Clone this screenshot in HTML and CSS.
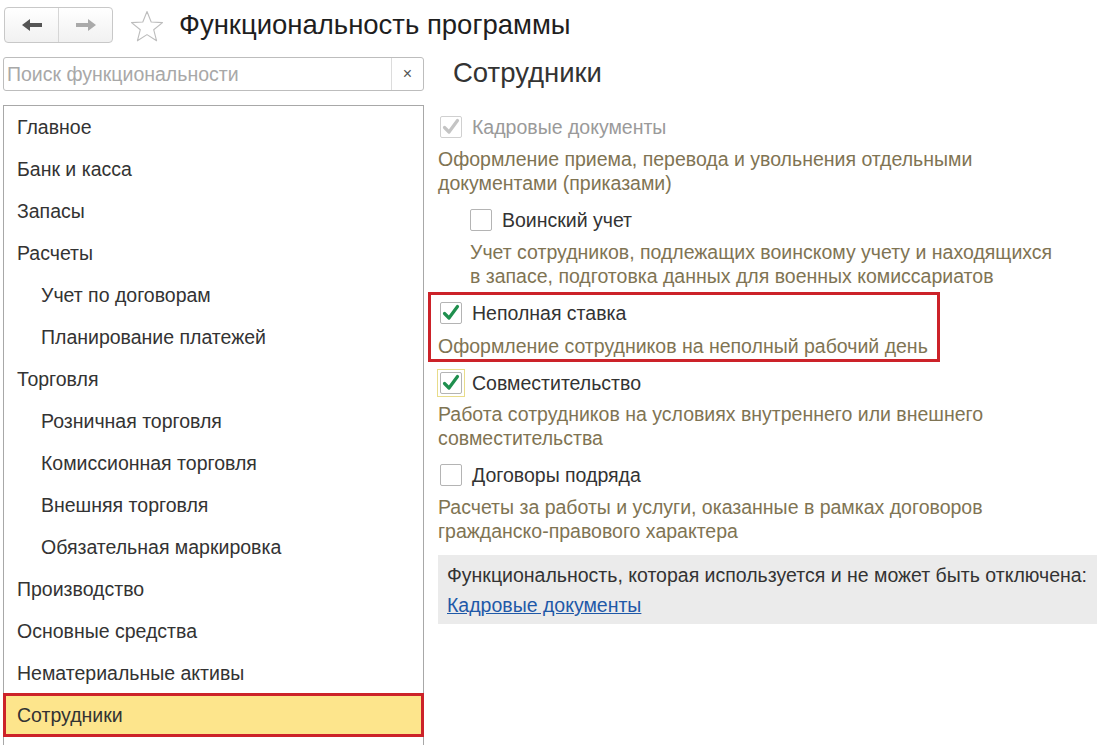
FILE: index.html
```html
<!DOCTYPE html>
<html lang="ru">
<head>
<meta charset="utf-8">
<title>Функциональность программы</title>
<link rel="stylesheet" href="styles.css">
</head>
<body>
<div class="header">
  <div class="navgroup">
    <div class="navbtn">
      <svg width="22" height="14" viewBox="0 0 22 14"><path d="M1 7 L9 1 L9 5 L21 5 L21 9 L9 9 L9 13 Z" fill="#555"/></svg>
    </div>
    <div class="navbtn">
      <svg width="22" height="14" viewBox="0 0 22 14"><path d="M21 7 L13 1 L13 5 L1 5 L1 9 L13 9 L13 13 Z" fill="#aaa"/></svg>
    </div>
  </div>
  <svg class="star" width="34" height="33" viewBox="0 0 34 33"><path d="M17 1.5 L21.2 12 L32.5 12.6 L23.7 19.7 L26.6 30.8 L17 24.6 L7.4 30.8 L10.3 19.7 L1.5 12.6 L12.8 12 Z" fill="none" stroke="#bdbdbd" stroke-width="1.1" stroke-linejoin="round"/></svg>
  <h1 class="title">Функциональность программы</h1>
</div>
<div class="main">
  <div class="leftcol">
    <div class="search">
      <span class="placeholder">Поиск функциональности</span>
      <span class="clear">×</span>
    </div>
    <ul class="sections">
      <li class="item">Главное</li>
      <li class="item">Банк и касса</li>
      <li class="item">Запасы</li>
      <li class="item">Расчеты</li>
      <li class="item sub">Учет по договорам</li>
      <li class="item sub">Планирование платежей</li>
      <li class="item">Торговля</li>
      <li class="item sub">Розничная торговля</li>
      <li class="item sub">Комиссионная торговля</li>
      <li class="item sub">Внешняя торговля</li>
      <li class="item sub">Обязательная маркировка</li>
      <li class="item">Производство</li>
      <li class="item">Основные средства</li>
      <li class="item">Нематериальные активы</li>
      <li class="item selected">Сотрудники</li>
    </ul>
  </div>
  <div class="rightcol">
    <h2 class="heading">Сотрудники</h2>
    <div class="option first disabled">
      <span class="cb"><svg viewBox="0 0 20 20"><path d="M3.5 10.5 L8 15 L16.5 3.5" fill="none" stroke="#c4c4c4" stroke-width="3.2" stroke-linecap="round" stroke-linejoin="round"/></svg></span>
      <span class="label">Кадровые документы</span>
    </div>
    <p class="desc">Оформление приема, перевода и увольнения отдельными<br>документами (приказами)</p>
    <div class="nested">
      <div class="option">
        <span class="cb"></span>
        <span class="label">Воинский учет</span>
      </div>
      <p class="desc">Учет сотрудников, подлежащих воинскому учету и находящихся<br>в запасе, подготовка данных для военных комиссариатов</p>
    </div>
    <div class="highlight">
      <div class="option">
        <span class="cb"><svg viewBox="0 0 20 20"><path d="M3.5 10.5 L8 15 L16.5 3.5" fill="none" stroke="#1f8f4e" stroke-width="3.2" stroke-linecap="round" stroke-linejoin="round"/></svg></span>
        <span class="label">Неполная ставка</span>
      </div>
      <p class="desc">Оформление сотрудников на неполный рабочий день</p>
    </div>
    <div class="option focused">
      <span class="focusring"><span class="cb"><svg viewBox="0 0 20 20"><path d="M3.5 10.5 L8 15 L16.5 3.5" fill="none" stroke="#1f8f4e" stroke-width="3.2" stroke-linecap="round" stroke-linejoin="round"/></svg></span></span>
      <span class="label">Совместительство</span>
    </div>
    <p class="desc tight">Работа сотрудников на условиях внутреннего или внешнего<br>совместительства</p>
    <div class="option">
      <span class="cb"></span>
      <span class="label">Договоры подряда</span>
    </div>
    <p class="desc">Расчеты за работы и услуги, оказанные в рамках договоров<br>гражданско-правового характера</p>
    <div class="infobox">
      <div class="infotext">Функциональность, которая используется и не может быть отключена:</div>
      <a class="link" href="#">Кадровые документы</a>
    </div>
  </div>
</div>
</body>
</html>
```

FILE: styles.css
```css
html, body {
  margin: 0;
  padding: 0;
  background: #fff;
  overflow: hidden;
}
body {
  font-family: "Liberation Sans", Arial, sans-serif;
  color: #333;
  width: 1097px;
  height: 745px;
}
.header {
  display: flex;
  align-items: center;
  height: 36px;
  padding: 7px 0 0 4px;
}
.navgroup {
  display: flex;
  width: 109px;
  height: 36px;
  box-sizing: border-box;
  border: 1px solid #c8c8c8;
  border-radius: 4px;
  background: linear-gradient(#ffffff, #f1f1f1);
}
.navbtn {
  flex: 1;
  display: flex;
  align-items: center;
  justify-content: center;
}
.navbtn + .navbtn {
  border-left: 1px solid #d6d6d6;
}
.star {
  margin-left: 17px;
  margin-top: 2px;
  flex: none;
}
.title {
  margin: 0 0 0 15px;
  font-weight: normal;
  font-size: 27.5px;
  line-height: 36px;
  color: #1e1e1e;
  white-space: nowrap;
}
.main {
  display: flex;
  margin-top: 14px;
}
.leftcol {
  width: 421px;
  margin-left: 3px;
  flex: none;
}
.search {
  display: flex;
  align-items: center;
  height: 34px;
  box-sizing: border-box;
  border: 1px solid #bdbdbd;
  border-radius: 3px;
}
.placeholder {
  flex: 1;
  padding-left: 3px;
  font-size: 19.5px;
  color: #a8a8a8;
  white-space: nowrap;
}
.clear {
  width: 31px;
  height: 100%;
  border-left: 1px solid #dcdcdc;
  display: flex;
  align-items: center;
  justify-content: center;
  font-size: 16px;
  color: #555;
}
.sections {
  list-style: none;
  margin: 14px 0 0 0;
  padding: 0;
  border: 1px solid #a8a8a8;
  border-bottom: none;
  height: 640px;
  box-sizing: border-box;
}
.item {
  height: 42px;
  line-height: 42px;
  padding-left: 13px;
  font-size: 19.5px;
  color: #333;
  white-space: nowrap;
}
.item.sub {
  padding-left: 37px;
}
.item.selected {
  background: #fde58c;
  box-shadow: inset 0 0 0 3px #cc2229;
  margin: -1px -1px 0 -1px;
  height: 44px;
  line-height: 44px;
  padding-left: 14px;
  position: relative;
}
.rightcol {
  flex: 1;
  margin-left: 14px;
}
.heading {
  margin: 0;
  font-weight: normal;
  font-size: 27.5px;
  color: #333;
  height: 34px;
  line-height: 32px;
  padding-left: 15px;
  white-space: nowrap;
}
.option {
  display: flex;
  align-items: center;
  height: 22px;
  margin-top: 14px;
}
.option.first {
  margin-top: 25px;
}
.cb {
  width: 22px;
  height: 22px;
  box-sizing: border-box;
  border: 1px solid #b4b4b4;
  border-radius: 2px;
  background: #fff;
  margin-left: 2px;
  display: flex;
  align-items: center;
  justify-content: center;
  flex: none;
}
.cb svg {
  width: 20px;
  height: 20px;
}
.disabled .cb {
  border-color: #d0d0d0;
}
.label {
  margin-left: 10px;
  font-size: 19.5px;
  line-height: 22px;
  color: #333;
  white-space: nowrap;
}
.disabled .label {
  color: #9a9a9a;
}
.desc {
  margin: 9px 0 0 0;
  font-size: 19.5px;
  line-height: 24px;
  color: #7f7453;
  white-space: nowrap;
}
.desc.tight {
  margin-top: 5px;
}
.nested {
  padding-left: 32px;
}
.nested .cb {
  margin-left: 0;
}
.highlight {
  margin: 4px 0 0 -10px;
  width: 512px;
  height: 70px;
  box-sizing: border-box;
  border: 3px solid #cc2229;
  padding: 0 0 0 7px;
}
.highlight .option {
  margin-top: 7px;
}
.highlight .desc {
  margin-top: 10px;
}
.option.focused {
  margin-top: 7px;
  height: 28px;
}
.focusring {
  width: 28px;
  height: 28px;
  box-sizing: border-box;
  border: 1px solid #e8dc8a;
  display: flex;
  align-items: center;
  justify-content: center;
  margin-left: -1px;
  flex: none;
}
.focusring .cb {
  margin-left: 0;
}
.focused .label {
  margin-left: 7px;
}
.infobox {
  margin-top: 12px;
  background: #ebebeb;
  padding: 8px 0 0 9px;
  height: 69px;
  box-sizing: border-box;
}
.infotext {
  font-size: 19.5px;
  color: #333;
  line-height: 24px;
  white-space: nowrap;
}
.link {
  display: inline-block;
  margin-top: 6px;
  font-size: 19.5px;
  line-height: 24px;
  color: #1f59a8;
  text-decoration: underline;
}
```
